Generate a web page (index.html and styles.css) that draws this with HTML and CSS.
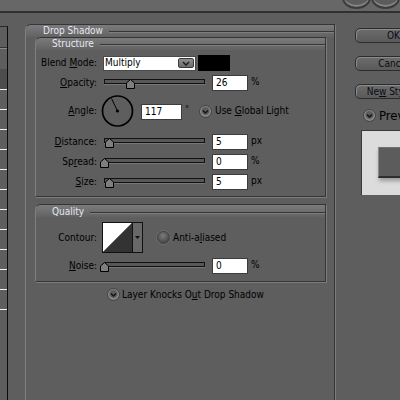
FILE: index.html
```html
<!DOCTYPE html>
<html lang="en">
<head>
    <meta charset="UTF-8">
    <title>Layer Style</title>
    <link rel="stylesheet" href="styles.css">
</head>
<body>
    <div class="titlebar">
        <div class="win-btns"><span></span><span></span></div>
    </div>

    <div class="dialog">
        <ul class="style-list">
            <li class="top"></li>
            <li class="sub"></li>
            <li class="selected"></li>
            <li></li><li></li><li></li><li></li><li></li><li></li>
            <li></li><li></li><li></li><li></li><li></li>
        </ul>

        <div class="effect">
            <div class="group outer">
                <div class="group-head">Drop Shadow</div>
                <div class="outer-body">

                    <div class="group structure">
                        <div class="group-head">Structure</div>
                        <div class="rows">
                            <div class="row">
                                <span class="label">Blend <u>M</u>ode:</span>
                                <div class="select">
                                    <span>Multiply</span>
                                    <span class="drop">
                                        <svg width="8" height="5" viewBox="0 0 8 5"><path d="M1 1 L4 4 L7 1" fill="none" stroke="#1a1a1a" stroke-width="1.4"/></svg>
                                    </span>
                                </div>
                                <span class="swatch"></span>
                            </div>
                            <div class="row">
                                <span class="label"><u>O</u>pacity:</span>
                                <div class="slider">
                                    <div class="track"></div>
                                    <svg class="thumb" style="left: 22px" width="9" height="10" viewBox="0 0 9 10"><polygon points="0.5,4 4.5,0.5 8.5,4 8.5,9.5 0.5,9.5" fill="#7e7e7e" stroke="#000"/></svg>
                                </div>
                                <span class="num">26</span>
                                <span class="unit">%</span>
                            </div>
                            <div class="row tall">
                                <span class="label"><u>A</u>ngle:</span>
                                <svg class="dial" width="34" height="32" viewBox="0 0 34 32">
                                    <circle cx="16.5" cy="16" r="15" fill="none" stroke="#000" stroke-width="1.7"/>
                                    <line x1="16.5" y1="16" x2="10.5" y2="3.5" stroke="#000" stroke-width="1"/>
                                    <circle cx="16.5" cy="16" r="1.6" fill="#000"/>
                                </svg>
                                <span class="num wide">117</span>
                                <span class="deg">°</span>
                                <span class="tick on">
                                    <svg width="11" height="11" viewBox="0 0 11 11"><path d="M3 4.5 L5.5 7 L8 4.5" fill="none" stroke="#151515" stroke-width="1.5"/></svg>
                                </span>
                                <span class="tick-label">Use <u>G</u>lobal Light</span>
                            </div>
                            <div class="row after-dial">
                                <span class="label"><u>D</u>istance:</span>
                                <div class="slider">
                                    <div class="track"></div>
                                    <svg class="thumb" style="left: 1px" width="9" height="10" viewBox="0 0 9 10"><polygon points="0.5,4 4.5,0.5 8.5,4 8.5,9.5 0.5,9.5" fill="#7e7e7e" stroke="#000"/></svg>
                                </div>
                                <span class="num">5</span>
                                <span class="unit">px</span>
                            </div>
                            <div class="row">
                                <span class="label">Sp<u>r</u>ead:</span>
                                <div class="slider">
                                    <div class="track"></div>
                                    <svg class="thumb" style="left: -4px" width="9" height="10" viewBox="0 0 9 10"><polygon points="0.5,4 4.5,0.5 8.5,4 8.5,9.5 0.5,9.5" fill="#7e7e7e" stroke="#000"/></svg>
                                </div>
                                <span class="num">0</span>
                                <span class="unit">%</span>
                            </div>
                            <div class="row">
                                <span class="label"><u>S</u>ize:</span>
                                <div class="slider">
                                    <div class="track"></div>
                                    <svg class="thumb" style="left: 1px" width="9" height="10" viewBox="0 0 9 10"><polygon points="0.5,4 4.5,0.5 8.5,4 8.5,9.5 0.5,9.5" fill="#7e7e7e" stroke="#000"/></svg>
                                </div>
                                <span class="num">5</span>
                                <span class="unit">px</span>
                            </div>
                        </div>
                    </div>

                    <div class="group quality">
                        <div class="group-head">Quality</div>
                        <div class="rows">
                            <div class="row contour-row">
                                <span class="label">Contour:</span>
                                <svg class="contour" width="41" height="31" viewBox="0 0 41 31">
                                    <rect x="0.5" y="0.5" width="40" height="30" fill="#686868" stroke="#111"/>
                                    <polygon points="1,1 30,1 1,30" fill="#fff"/>
                                    <polygon points="30,1 30,30 1,30" fill="#333"/>
                                    <line x1="30.5" y1="1" x2="30.5" y2="30" stroke="#111"/>
                                    <polygon points="33,14 38,14 35.5,17" fill="#111"/>
                                </svg>
                                <span class="tick off"></span>
                                <span class="tick-label">Anti-a<u>l</u>iased</span>
                            </div>
                            <div class="row noise-row">
                                <span class="label"><u>N</u>oise:</span>
                                <div class="slider">
                                    <div class="track"></div>
                                    <svg class="thumb" style="left: -4px" width="9" height="10" viewBox="0 0 9 10"><polygon points="0.5,4 4.5,0.5 8.5,4 8.5,9.5 0.5,9.5" fill="#7e7e7e" stroke="#000"/></svg>
                                </div>
                                <span class="num">0</span>
                                <span class="unit">%</span>
                            </div>
                        </div>
                    </div>

                    <div class="knock">
                        <span class="tick on">
                            <svg width="11" height="11" viewBox="0 0 11 11"><path d="M3 4.5 L5.5 7 L8 4.5" fill="none" stroke="#151515" stroke-width="1.5"/></svg>
                        </span>
                        <span class="tick-label">Layer Knocks O<u>u</u>t Drop Shadow</span>
                    </div>
                </div>
            </div>
        </div>

        <div class="actions">
            <button class="btn"><span>OK</span></button>
            <button class="btn"><span>Cancel</span></button>
            <button class="btn"><span>Ne<u>w</u> Style...</span></button>
            <div class="preview-row">
                <span class="tick on">
                    <svg width="11" height="11" viewBox="0 0 11 11"><path d="M3 4.5 L5.5 7 L8 4.5" fill="none" stroke="#151515" stroke-width="1.5"/></svg>
                </span>
                <span class="preview-label">Preview</span>
            </div>
            <div class="preview-box">
                <div class="shape"></div>
            </div>
        </div>
    </div>
</body>
</html>
```

FILE: styles.css
```css
* {
    margin: 0;
    padding: 0;
    box-sizing: border-box;
}

body {
    width: 400px;
    height: 400px;
    overflow: hidden;
    background: #5e5e5e;
    font-family: "DejaVu Sans Condensed", "Liberation Sans", sans-serif;
    font-size: 10px;
    line-height: 12px;
    color: #000;
}

u {
    text-decoration: underline;
}

/* window frame */

.titlebar {
    height: 13px;
    background: #676767;
    border-bottom: 2px solid #303030;
    display: flex;
    justify-content: flex-end;
    overflow: hidden;
}

.win-btns {
    display: flex;
}

.win-btns span {
    width: 29px;
    height: 22px;
    margin-top: -13px;
    border-radius: 50%;
    border: 2px solid #3c3c3c;
    background: #5c5c5c;
    box-shadow: inset 0 -2px 0 #858585;
}

.dialog {
    display: flex;
    height: 387px;
}

/* styles list on the left */

.style-list {
    list-style: none;
    width: 8px;
    flex-shrink: 0;
    margin-top: 13px;
    border-top: 1px solid #262626;
    border-right: 1px solid #0c0c0c;
}

.style-list li {
    height: 20px;
    border-bottom: 1px solid #f2f2f2;
}

.style-list li.top {
    height: 21px;
    border-bottom-color: #333;
}

.style-list li.sub {
    height: 21px;
    border-top: 1px solid #8a8a8a;
    border-bottom: none;
}

.style-list li.selected {
    height: 21px;
    background: #4d4d4d;
}

/* group boxes */

.effect {
    width: 310px;
    flex-shrink: 0;
    margin: 11px 0 0 17px;
}

.group {
    border: 1px solid #353535;
    border-left-color: #808080;
    border-radius: 6px 0 0 0;
    box-shadow: 1px 1px 0 #7c7c7c;
}

.group.outer {
    height: 400px;
}

.group-head {
    height: 12px;
    display: flex;
    align-items: center;
    gap: 6px;
    padding-left: 16px;
    color: #e6e8f2;
    background: linear-gradient(#7b7b7b, #626262);
    border-radius: 5px 0 0 0;
}

.group-head::after {
    content: "";
    flex: 1;
    height: 1px;
    margin-top: 1px;
    background: #363636;
    box-shadow: 0 1px 0 #7e7e7e;
}

.outer > .group-head {
    padding-left: 17px;
}

.outer-body {
    padding: 0 8px 0 9px;
}

.structure .rows {
    padding: 5px 0 6px;
}

.quality {
    margin-top: 7px;
}

.quality .group-head {
    padding-top: 2px;
}

.quality .rows {
    padding: 5px 0 7px;
}

/* rows */

.row {
    display: flex;
    align-items: center;
    height: 16px;
    margin-top: 4px;
}

.row:first-child {
    margin-top: 0;
}

.row.tall {
    height: 32px;
}

.row.after-dial {
    margin-top: 7px;
}

.row.contour-row {
    height: 31px;
}

.row.noise-row {
    margin-top: 5px;
}

.label {
    width: 61px;
    flex-shrink: 0;
    margin-right: 4px;
    text-align: right;
}

/* controls */

.select {
    width: 93px;
    height: 15px;
    margin-left: 2px;
    display: flex;
    align-items: center;
    justify-content: space-between;
    padding: 0 1px 0 1px;
    background: #fff;
    border: 1px solid #4a4a4a;
}

.select .drop {
    width: 16px;
    height: 10px;
    display: flex;
    align-items: center;
    justify-content: center;
    background: linear-gradient(#8f8f8f, #6c6c6c);
    border: 1px solid #3a3a3a;
    border-radius: 2px;
}

.swatch {
    width: 32px;
    height: 16px;
    margin-left: 2px;
    background: #000;
}

.slider {
    position: relative;
    width: 101px;
    height: 16px;
    margin-left: 3px;
    flex-shrink: 0;
}

.track {
    height: 5px;
    margin-top: 4px;
    background: #575757;
    border: 1px solid #111;
    box-shadow: 0 1px 0 #767676;
}

.thumb {
    position: absolute;
    top: 4px;
}

.num {
    width: 36px;
    height: 16px;
    margin-left: 7px;
    padding-left: 3px;
    line-height: 14px;
    background: #fff;
    border: 1px solid #3c3c3c;
    flex-shrink: 0;
}

.num.wide {
    width: 41px;
    margin-left: 6px;
    margin-top: 2px;
}

.unit {
    margin-left: 3px;
    align-self: flex-start;
    margin-top: 1px;
}

.dial {
    flex-shrink: 0;
}

.deg {
    margin-left: 3px;
    align-self: flex-start;
    margin-top: 8px;
    font-size: 9px;
}

.tick {
    width: 13px;
    height: 13px;
    flex-shrink: 0;
    display: flex;
    align-items: center;
    justify-content: center;
    border-radius: 50%;
    border: 1px solid #444;
}

.tick.on {
    background: radial-gradient(circle at 50% 45%, #5c5c5c 0 40%, #8e8e8e 62%, #606060 85%);
}

.tick.off {
    background: radial-gradient(circle at 45% 35%, #7c7c7c, #4a4a4a 70%);
    box-shadow: 0 0 0 1px #6c6c6c;
}

.row.tall .tick {
    margin-left: 10px;
}

.contour {
    margin-left: 1px;
    flex-shrink: 0;
}

.contour-row .tick {
    margin-left: 14px;
}

.tick-label {
    margin-left: 3px;
    white-space: nowrap;
}

.knock {
    display: flex;
    align-items: center;
    height: 13px;
    margin: 6px 0 0 72px;
}

.knock .tick-label {
    margin-left: 2px;
}

/* right column */

.actions {
    flex: 0 0 100px;
    padding: 15px 0 0 20px;
}

.btn {
    display: block;
    width: 77px;
    height: 15px;
    text-align: center;
    white-space: nowrap;
    border: 1px solid #2c2c2c;
    border-radius: 5px;
    background: linear-gradient(#6c6c6c, #5a5a5a);
    box-shadow: inset 1px 1px 0 #8a8a8a;
    color: #0a0a14;
    font-family: inherit;
    font-size: 10px;
    line-height: 13px;
}

.btn + .btn {
    margin-top: 13px;
}

.preview-row {
    display: flex;
    align-items: center;
    height: 13px;
    margin: 10px 0 0 8px;
}

.preview-label {
    margin-left: 3px;
    font-size: 13px;
    white-space: nowrap;
}

.preview-box {
    width: 60px;
    height: 65px;
    margin: 8px 0 0 6px;
    padding: 16px 0 0 16px;
    background: #dcdcdc;
    border-left: 1px solid #3a3a3a;
    border-top: 1px solid #3a3a3a;
}

.preview-box .shape {
    width: 40px;
    height: 31px;
    background: #5c5c5c;
    border-left: 1px solid #8a8a8a;
    border-top: 1px solid #727272;
    border-bottom: 2px solid #2e2e2e;
    box-shadow: 1px 3px 4px rgba(0, 0, 0, 0.3);
}
```
